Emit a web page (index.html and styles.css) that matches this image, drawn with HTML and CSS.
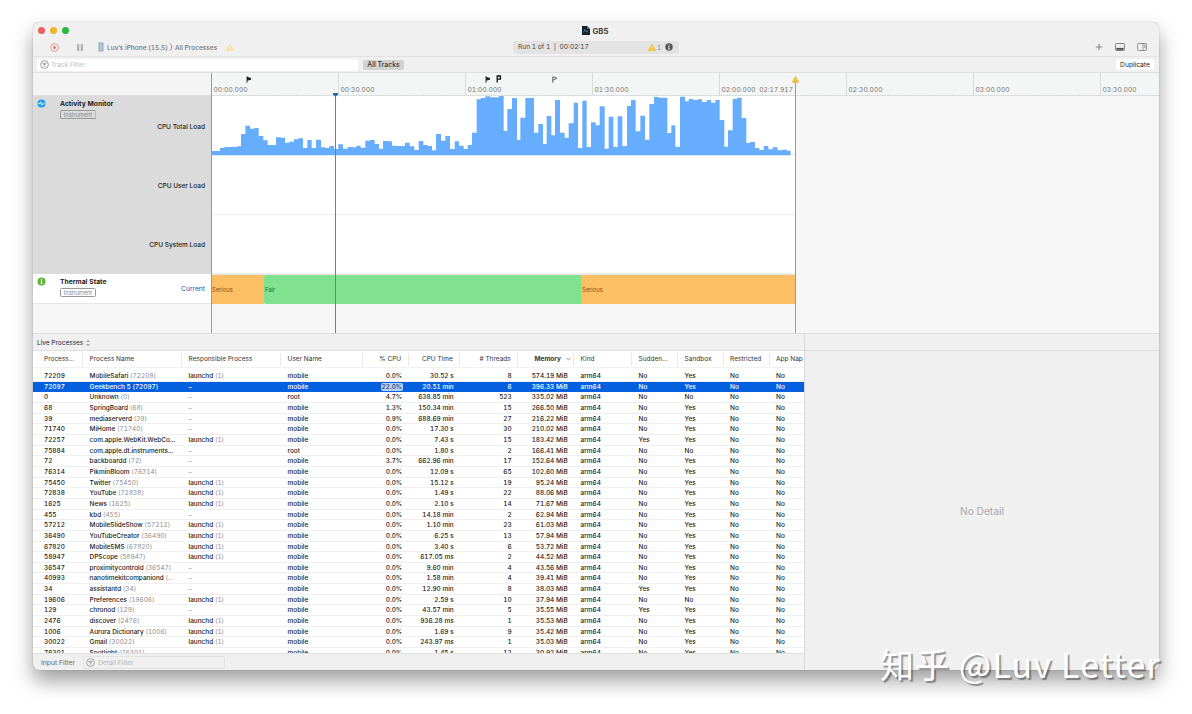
FILE: index.html
```html
<!DOCTYPE html>
<html lang="en">
<head>
<meta charset="utf-8">
<title>GB5</title>
<link rel="stylesheet" href="styles.css">
</head>
<body>
<div class="window">
  <header class="titlebar">
    <div class="title-row">
      <span class="light red"></span><span class="light yellow"></span><span class="light green"></span>
      <div class="doc-title">
        <svg width="8" height="9" viewBox="0 0 8 9"><path d="M0 0h5l3 3v6H0z" fill="#14202c"/><path d="M5 0l3 3H5z" fill="#53616e"/><path d="M1.5 6.5l1.3-3 1.2 2.4 1-1.4 1 2" fill="none" stroke="#3f8fc4" stroke-width=".7"/></svg>
        <span>GB5</span>
      </div>
    </div>
    <div class="tool-row">
      <svg class="record" width="9" height="9" viewBox="0 0 9 9"><circle cx="4.5" cy="4.5" r="3.8" fill="none" stroke="#f08a7c" stroke-width=".9"/><circle cx="4.5" cy="4.5" r="1.5" fill="#f0776a"/></svg>
      <svg class="pause" width="6" height="7" viewBox="0 0 6 7"><path d="M.5 .5h1.4v6H.5zM4.1 .5h1.4v6H4.1z" fill="#ddd" stroke="#909090" stroke-width=".7"/></svg>
      <svg class="phone" width="6" height="10" viewBox="0 0 6 10"><rect x=".5" y=".4" width="5" height="9.2" rx=".6" fill="#8ea6bb"/><rect x="1.4" y="1.4" width="3.2" height="7.2" fill="#b3c6d5"/></svg>
      <span class="target">Luv’s iPhone (15.5)</span>
      <svg class="chev" width="4" height="8" viewBox="0 0 4 8"><path d="M.8 .3Q4.8 4 .8 7.7" fill="none" stroke="#777" stroke-width=".8"/></svg>
      <span class="target">All Processes</span>
      <svg class="warn-soft" width="8" height="7" viewBox="0 0 8 7"><path d="M4 .4L7.6 6.6H.4z" fill="#fae3aa" stroke="#f8d88c" stroke-width=".7" stroke-linejoin="round"/><path d="M4 2.4v2.3M4 5.2v.7" stroke="#fff" stroke-width=".7"/></svg>
      <div class="run-status">
        <span>Run 1 of 1 &nbsp;|&nbsp; 00:02:17</span>
        <svg class="status-warn" width="8" height="7" viewBox="0 0 8 7"><path d="M4 .4L7.6 6.6H.4z" fill="#f4bd2e" stroke="#f4bd2e" stroke-width=".7" stroke-linejoin="round"/><path d="M4 2.3v2.3M4 5.1v.8" stroke="#fff" stroke-width=".7"/></svg>
        <span class="warn-count">1</span>
        <svg width="8" height="8" viewBox="0 0 8 8"><circle cx="4" cy="4" r="3.7" fill="#555"/><path d="M4 1.6v1M3.3 3.5H4v2.4M3.1 6h1.9" stroke="#fff" stroke-width=".8" fill="none"/></svg>
      </div>
      <div class="actions">
        <svg width="8" height="8" viewBox="0 0 8 8"><path d="M4 .8v6.4M.8 4h6.4" stroke="#666" stroke-width=".8"/></svg>
        <svg width="10" height="8" viewBox="0 0 10 8"><rect x=".6" y=".5" width="8.8" height="7" rx=".8" fill="none" stroke="#666" stroke-width=".8"/><rect x="1.4" y="4.9" width="7.2" height="2" fill="#555"/></svg>
        <svg width="10" height="8" viewBox="0 0 10 8"><rect x=".6" y=".5" width="8.8" height="7" rx=".8" fill="none" stroke="#777" stroke-width=".8"/><path d="M6 .5v7M7.1 2.1h1.4M7.1 3.4h1.4M7.1 4.7h1.4" stroke="#777" stroke-width=".7"/></svg>
      </div>
    </div>
  </header>

  <div class="filterbar">
    <div class="track-filter">
      <svg width="9" height="9" viewBox="0 0 9 9"><circle cx="4.5" cy="4.5" r="3.9" fill="none" stroke="#777" stroke-width=".7"/><path d="M2.3 3.3h4.4M3.1 4.7h2.8M3.9 6.1h1.2" stroke="#777" stroke-width=".7"/></svg>
      <span>Track Filter</span>
    </div>
    <span class="all-tracks">All Tracks</span>
    <span class="duplicate">Duplicate</span>
  </div>

  <div class="timeline">
    <div class="side">
      <div class="side-head"></div>
      <div class="activity">
        <svg class="badge" width="9" height="9" viewBox="0 0 9 9"><circle cx="4.5" cy="4.5" r="4" fill="#1d9fe6"/><path d="M1.2 4.7h1.5l.9-1.8 1.5 3.2.8-1.4h1.9" fill="none" stroke="#fff" stroke-width=".9"/></svg>
        <div class="track-name">Activity Monitor</div>
        <span class="tag tag-menu">Instrument</span>
        <div class="lane">CPU Total Load</div>
        <div class="lane">CPU User Load</div>
        <div class="lane">CPU System Load</div>
      </div>
      <div class="thermal">
        <svg class="badge" width="9" height="9" viewBox="0 0 9 9"><circle cx="4.5" cy="4.5" r="4" fill="#5cb531"/><path d="M4.5 1.8v3" stroke="#fff" stroke-width="1.2"/><circle cx="4.5" cy="6" r="1" fill="#fff"/></svg>
        <div class="track-name">Thermal State</div>
        <span class="tag">Instrument</span>
        <span class="current">Current</span>
      </div>
    </div>
    <div class="tracks">
      <div class="ruler" id="ruler"></div>
      <div class="lane-row"><svg id="load" width="583.33" height="60" viewBox="21 18 1750 180"></svg></div>
      <div class="lane-row"></div>
      <div class="lane-row"></div>
      <div class="states">
        <span class="state serious first">Serious</span><span class="state fair">Fair</span><span class="state serious last">Serious</span>
      </div>
      <div class="playhead"><svg width="5" height="4" viewBox="0 0 5 4"><path d="M0 0h5v1.5L2.5 4 0 1.5z" fill="#2a6aa8"/></svg></div>
      <div class="run-end"><svg width="7" height="7" viewBox="0 0 8 8"><path d="M4 .4L7.6 7.2H.4z" fill="#eeb42c" stroke="#eeb42c" stroke-width=".7" stroke-linejoin="round"/><path d="M4 2.6v2.3M4 5.5v.8" stroke="#fff" stroke-width=".7"/></svg></div>
      <span class="end-time">02:17.917</span>
      <svg class="flag f1" width="6" height="7" viewBox="0 0 6 7"><path d="M1 .3v6.5" stroke="#222" stroke-width=".9"/><path d="M1 .8l4 1.2v1.8l-4 1z" fill="#222"/></svg>
      <svg class="flag f2" width="6" height="7" viewBox="0 0 6 7"><path d="M1 .3v6.5" stroke="#222" stroke-width=".9"/><path d="M1 .8l4 1.2v1.8l-4 1z" fill="#222"/></svg>
      <svg class="flag f3" width="6" height="8" viewBox="0 0 6 8"><path d="M1.2 7.4V1h3.2v3.2H1.2" fill="none" stroke="#111" stroke-width="1.3"/></svg>
      <svg class="flag f4" width="6" height="7" viewBox="0 0 6 7"><path d="M.8 6.8V.8L5 2.2 .8 4.2" fill="none" stroke="#555" stroke-width=".9"/></svg>
    </div>
  </div>

  <div class="lower">
    <section class="processes">
      <div class="pane-head"><span>Live Processes</span>
        <svg width="4" height="6" viewBox="0 0 4 6"><path d="M.7 2L2 .6 3.3 2M.7 4L2 5.4 3.3 4" fill="none" stroke="#444" stroke-width=".7"/></svg>
      </div>
      <div class="grid table-head">
        <span>Process...</span><span>Process Name</span><span>Responsible Process</span><span>User Name</span><span class="r">% CPU</span><span class="r">CPU Time</span><span class="r"># Threads</span><span class="r sorted">Memory<svg width="5" height="4" viewBox="0 0 5 4"><path d="M.5 1l2 1.8 2-1.8" fill="none" stroke="#666" stroke-width=".7"/></svg></span><span>Kind</span><span>Sudden...</span><span>Sandbox</span><span>Restricted</span><span>App Nap</span>
      </div>
      <div class="rows" id="rows"></div>
      <div class="inputbar">
        <span>Input Filter</span>
        <div class="detail-filter">
          <svg width="9" height="9" viewBox="0 0 9 9"><circle cx="4.5" cy="4.5" r="3.9" fill="none" stroke="#888" stroke-width=".7"/><path d="M2.3 3.3h4.4M3.1 4.7h2.8M3.9 6.1h1.2" stroke="#888" stroke-width=".7"/></svg>
          <span>Detail Filter</span>
        </div>
      </div>
    </section>
    <aside class="detail"><div class="detail-head"></div><div class="empty">No Detail</div></aside>
  </div>
</div>
<div class="watermark">知乎 @Luv Letter</div>
<script src="app.js"></script>
</body>
</html>
```
FILE: styles.css
```css
* { box-sizing: border-box; }
body {
  margin: 0;
  width: 1192px;
  height: 714px;
  overflow: hidden;
  position: relative;
  padding: 22px 33px;
  background: #fff;
  font-family: Inter, "Liberation Sans", sans-serif;
  font-size: 6.5px;
  font-variant-numeric: tabular-nums;
  color: #222;
}
svg { display: block; flex: none; }
.window {
  width: 1126px;
  height: 648px;
  border-radius: 6px;
  overflow: hidden;
  background: #f0f0f0;
  display: flex;
  flex-direction: column;
  box-shadow: 0 0 1px rgba(0,0,0,.4), 0 11px 20px rgba(0,0,0,.38);
}
.titlebar { height: 35px; border-bottom: 1px solid #e2e2e2; }
.title-row { height: 17px; display: flex; align-items: center; padding-left: 4.5px; gap: 5px; }
.light { width: 7px; height: 7px; border-radius: 50%; }
.red { background: #ec5f5a; }
.yellow { background: #f0b429; }
.green { background: #28b83f; }
.doc-title { margin-left: 508px; display: flex; align-items: center; gap: 3px; font-weight: 700; font-size: 7.8px; color: #444; }
.tool-row { height: 16px; display: flex; align-items: center; color: #777; }
.record { margin-left: 17px; }
.pause { margin-left: 18px; }
.phone { margin: 0 3px 0 15px; }
.target { font-size: 6.55px; line-height: 10px; padding-top: 1px; white-space: nowrap; font-weight: 500; }
.chev { margin: 0 1.5px; }
.warn-soft { margin-left: 9px; }
.run-status {
  margin-left: auto;
  width: 166px;
  height: 13px;
  border-radius: 3px;
  background: #e3e3e3;
  display: flex;
  align-items: center;
  padding: 0 6px 0 5px;
  color: #444;
  font-size: 6.6px;
}
.status-warn { margin-left: auto; }
.warn-count { margin: 0 4px 0 1px; font-size: 6px; color: #888; }
.actions { width: 480px; justify-content: flex-end; display: flex; align-items: center; gap: 12px; padding-right: 12px; }

.filterbar { height: 16px; display: flex; align-items: center; border-bottom: 1px solid #dedede; padding-right: 5px; }
.track-filter { margin-left: 4px; width: 321px; height: 12px; background: #fff; border-radius: 2px; display: flex; align-items: center; padding-left: 3px; gap: 2px; color: #bcbcbc; }
.all-tracks { margin-left: 5px; width: 41px; height: 10px; line-height: 10px; border-radius: 2.5px; text-align: center; background: #d2d2d2; font-size: 6.9px; font-weight: 500; color: #333; }
.duplicate { margin-left: auto; width: 38px; height: 11px; line-height: 12px; text-align: center; background: #fff; border-radius: 2px; font-size: 6.7px; color: #222; }

.timeline { height: 261px; flex: none; display: flex; border-bottom: 1px solid #dcdcdc; background: #f6f6f6; }
.side { flex: none; width: 179px; border-right: 1px solid #999; }
.side-head { height: 23px; background: #f4f4f4; border-bottom: 1px solid #dedede; }
.activity { position: relative; height: 178px; padding-top: 1px; background: #dbdbdb; }
.thermal { position: relative; height: 30px; background: #fff; border-bottom: 1px solid #e6e6e6; }
.badge { position: absolute; left: 4px; top: 3px; }
.track-name { position: absolute; left: 27px; top: 3px; font-weight: 700; line-height: 10px; font-size: 6.75px; color: #222; }
.tag { position: absolute; left: 27px; top: 14px; width: 36px; height: 9px; line-height: 8px; border: 1px solid #999; border-radius: 1.5px; text-align: center; font-size: 5.6px; color: #888; }
.tag-menu { border-right-style: dotted; }
.lane { height: 59.2px; line-height: 60.4px; text-align: right; padding-right: 6px; color: #222; font-size: 6.5px; font-weight: 500; }
.current { position: absolute; right: 6px; top: 11px; line-height: 9px; font-size: 6.7px; color: #2253b5; }
.tracks { position: relative; flex: 1; min-width: 0; }
.ruler { position: relative; height: 23px; overflow: hidden; background: #f4f6f5; border-bottom: 1px solid #d9dede; display: flex; }
.mark { flex: none; width: 127px; height: 23px; border-right: 1px solid #d6dcda; display: flex; align-items: flex-end; padding: 0 0 1px 1.5px; color: #777; letter-spacing: .08px; font-size: 6.6px; line-height: 9px; background: repeating-linear-gradient(to right, transparent 0 20.17px, #dfe3e1 20.17px 21.17px) 0 100% / 100% 2px no-repeat; }
.lane-row { width: 584px; height: 59.33px; background: #fff; border-bottom: 1px solid #ececec; }
.states { display: flex; height: 30px; }
.state { line-height: 29px; padding-left: 1px; font-size: 5.8px; border-top: 1px solid #e8e8e8; }
.serious { background: #fdbf64; color: #8f4a0e; }
.fair { background: #80e28f; color: #1e6a2b; width: 317px; border-radius: 2px 0 0 2px; }
.first { width: 52px; padding-left: 0; }
.last { width: 214px; }
.playhead { position: absolute; left: 123px; top: 20px; bottom: 0; width: 1px; background: #4e87b8; }
.playhead svg { position: absolute; left: -2px; top: 0; }
.run-end { position: absolute; left: 583px; top: 3px; bottom: 0; width: 1px; background: #9a9a9a; }
.run-end svg { position: absolute; left: -3px; top: 0; }
.end-time { position: absolute; right: 366px; top: 13px; line-height: 9px; font-size: 6.6px; letter-spacing: .04px; color: #777; }
.flag { position: absolute; top: 3px; }
.f1 { left: 34px; }
.f2 { left: 273px; }
.f3 { left: 284px; top: 2px; }
.f4 { left: 340px; }

.lower { flex: 1; display: flex; min-height: 0; }
.processes { width: 772px; border-right: 1px solid #d8d8d8; display: flex; flex-direction: column; }
.pane-head { height: 17px; flex: none; display: flex; align-items: center; gap: 3px; padding: 1px 0 0 4px; border-bottom: 1px solid #dedede; }
.grid { display: grid; grid-template-columns: 50px 99px 99px 82px 45.5px 51.5px 58px 56px 58px 46px 45.5px 46px 1fr; }
.grid > span { padding-left: 6.6px; white-space: nowrap; overflow: hidden; }
.grid > span:first-child { padding-left: 11px; }
.grid > .r { text-align: right; padding: 0 6.3px 0 0; }
.table-head { height: 17px; flex: none; background: #fff; align-items: center; color: #333; border-bottom: 1px solid #f2f2f2; }
.table-head > span { border-right: 1px solid #e9e9e9; height: 13px; line-height: 13px; font-size: 6.5px; }
.table-head > span:last-child { border: 0; }
.table-head > .sorted { display: flex; justify-content: flex-end; align-items: center; gap: 5px; padding-right: 2px; font-weight: 700; }
.rows { flex: 1; overflow: hidden; background: #fff; padding-top: 3px; }
.row { height: 10.665px; line-height: 11.8px; border-bottom: 1px solid #efefef; color: #222; font-size: 6.45px; font-weight: 500; }
.row i { font-style: normal; font-weight: 400; color: #8c8c8c; }
.row b { font-weight: 500; }
.selected, .selected i { background: #0560e0; color: #fff; border-color: #0560e0; }
.selected i { font-weight: 500; }
.selected b { background: #b5d1f7; color: #173a6e; border-radius: 2px; padding: 0 1px; margin-right: -1px; }
.inputbar { height: 17px; flex: none; border-top: 1px solid #e0e0e0; display: flex; align-items: center; padding-left: 8px; color: #666; font-size: 6.75px; }
.detail-filter { margin-left: 8px; width: 142px; height: 13px; border: 1px solid #e2e2e2; border-radius: 2px; display: flex; align-items: center; gap: 3px; padding-left: 2px; color: #b4b4b4; }
.detail { flex: 1; display: flex; flex-direction: column; }
.detail-head { height: 17px; border-bottom: 1px solid #dedede; }
.empty { flex: 1; display: flex; align-items: center; justify-content: center; font-size: 10.2px; color: #a8a8a8; }
.watermark { position: absolute; left: 880px; top: 642px; line-height: 44px; font-family: "Noto Sans CJK SC", sans-serif; font-size: 34px; letter-spacing: 1.15px; white-space: nowrap; color: #fff; text-shadow: 2px 2px 1px rgba(0,0,0,.38); }
```
FILE: app.js
```js
// Time ruler
document.getElementById('ruler').innerHTML =
  ['00:00.000', '00:30.000', '01:00.000', '01:30.000', '02:00.000', '02:30.000', '03:00.000', '03:30.000']
    .map(t => `<div class="mark">${t}</div>`).join('');

// CPU load steps: x start, y top
const early = '20:183,45:174,58:171,95:169,108:132,121:107,135:116,148:114,161:138,175:151,188:165,213:142,228:143,240:158,253:155,267:148,280:145,294:174,307:150,320:174,333:149,348:172,361:174,373:168,387:177,400:163,414:176,428:171,442:172,454:167,467:173,481:152,495:150,509:162,522:176,534:153,547:154,561:167,575:168,600:158,614:169,628:180,641:153,655:165,668:168,681:181,693:132,708:152,721:138,735:177,749:154,762:167,776:177,788:165';
const late = '36:128,50:28,62:24,76:19,90:22,117:18,131:123,142:57,156:24,171:150,181:83,196:24,222:128,235:102,249:162,260:78,274:136,285:30,300:128,314:143,326:100,341:38,354:174,367:32,380:171,393:97,407:106,419:49,434:176,446:80,460:171,473:79,487:168,501:48,513:30,527:124,541:77,555:149,568:42,582:21,596:23,622:129,634:106,646:170,660:20,675:34,686:27,699:30,713:28,726:36,740:30,753:38,766:30,779:90,793:170,804:121,818:27,831:23,845:84,859:159,870:156,885:174,898:180,911:168,925:178,938:172,953:181,967:179,981:182';
const parse = (s, dx) => s.split(',').map(p => { const [x, y] = p.split(':').map(Number); return [x + dx, y]; });
const steps = parse(early, 0).concat(parse(late, 765));
const d = 'M20 196' + steps.map(([x, y]) => `H${x}V${y}`).join('') + 'H1757V196Z';
document.getElementById('load').innerHTML = `<path d="${d}" fill="#66adfd"/>`;

// Process table: pid | name | parent | user | cpu | time | threads | memory | sudden | sandbox
const data = `72209|MobileSafari|1|mobile|0.0%|30.52 s|8|574.19|No|Yes
72097|Geekbench 5|0|mobile|22.0%|20.51 min|6|396.33|No|Yes
0|Unknown|0|root|4.7%|638.85 min|523|335.02|No|No
68|SpringBoard|0|mobile|1.3%|150.34 min|15|266.50|No|Yes
39|mediaserverd|0|mobile|0.9%|688.69 min|27|216.22|No|Yes
71740|MiHome|0|mobile|0.0%|17.30 s|30|210.02|No|Yes
72257|com.apple.WebKit.WebCo...|1|mobile|0.0%|7.43 s|15|183.42|Yes|Yes
75884|com.apple.dt.instruments...|0|root|0.0%|1.80 s|2|166.41|No|No
72|backboardd|0|mobile|3.7%|662.96 min|17|152.64|No|Yes
76314|PikminBloom|0|mobile|0.0%|12.09 s|65|102.60|No|Yes
75450|Twitter|1|mobile|0.0%|15.12 s|19|95.24|No|Yes
72838|YouTube|1|mobile|0.0%|1.49 s|22|88.06|No|Yes
1625|News|1|mobile|0.0%|2.10 s|14|71.67|No|Yes
455|kbd|0|mobile|0.0%|14.18 min|2|62.94|No|Yes
57212|MobileSlideShow|1|mobile|0.0%|1.10 min|23|61.03|No|Yes
36490|YouTubeCreator|1|mobile|0.0%|6.25 s|13|57.94|No|Yes
67820|MobileSMS|1|mobile|0.0%|3.40 s|6|53.72|No|Yes
58947|DPScope|1|mobile|0.0%|617.05 ms|2|44.52|No|Yes
36547|proximitycontrold|0|mobile|0.0%|9.60 min|4|43.56|No|Yes
40993|nanotimekitcompaniond|0|mobile|0.0%|1.58 min|4|39.41|No|Yes
34|assistantd|0|mobile|0.0%|12.90 min|8|38.03|Yes|Yes
19606|Preferences|1|mobile|0.0%|2.59 s|10|37.94|No|No
129|chronod|0|mobile|0.0%|43.57 min|5|35.55|Yes|Yes
2476|discover|1|mobile|0.0%|936.28 ms|1|35.53|No|Yes
1006|Aurora Dictionary|1|mobile|0.0%|1.69 s|9|35.42|No|Yes
30022|Gmail|1|mobile|0.0%|243.97 ms|1|35.03|No|Yes
76301|Spotlight|0|mobile|0.0%|1.45 s|12|30.92|No|Yes`;
document.getElementById('rows').innerHTML = data.split('\n').map((line, i) => {
  const [pid, name, par, user, cpu, time, thr, mem, sud, box] = line.split('|');
  const suffix = name.endsWith('...') ? '' : name.startsWith('nano') ? ' <i>(...</i>' : ` <i>(${pid})</i>`;
  const parent = par === '1' ? 'launchd <i>(1)</i>' : '<i>–</i>';
  return `<div class="grid row${i === 1 ? ' selected' : ''}"><span>${pid}</span><span>${name}${suffix}</span><span>${parent}</span><span>${user}</span><span class="r"><b>${cpu}</b></span><span class="r">${time}</span><span class="r">${thr}</span><span class="r">${mem} MiB</span><span>arm64</span><span>${sud}</span><span>${box}</span><span>No</span><span>No</span></div>`;
}).join('');
```
